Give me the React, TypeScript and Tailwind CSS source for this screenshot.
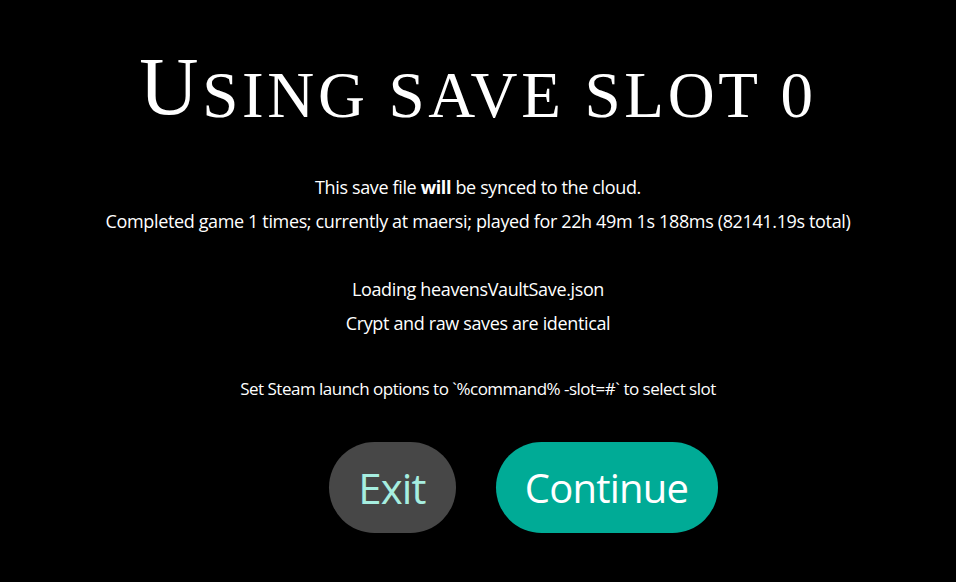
export default function App() {
  const body = { fontFamily: '"Open Sans", "Noto Sans", sans-serif' } as const;
  return (
    <div className="w-[956px] h-[582px] bg-black text-white flex flex-col items-center overflow-hidden">
      <h1
        className="mt-[52px] h-[76px] flex items-end text-white tracking-[0.23em] leading-none"
        style={{ fontFamily: '"Liberation Serif", serif' }}
      >
        <span className="text-[82px]">U</span>
        <span className="text-[65px]">SING SAVE SLOT 0</span>
      </h1>
      <div className="mt-[42px] flex flex-col items-center text-[18px] leading-[34px] tracking-[-0.02em]" style={body}>
        <p>
          This save file <b className="font-bold">will</b> be synced to the cloud.
        </p>
        <p>Completed game 1 times; currently at maersi; played for 22h 49m 1s 188ms (82141.19s total)</p>
        <p className="mt-[34px]">Loading heavensVaultSave.json</p>
        <p>Crypt and raw saves are identical</p>
        <p className="mt-[32px] text-[17px] tracking-[-0.03em]">Set Steam launch options to `%command% -slot=#` to select slot</p>
      </div>
      <div className="mt-[36px] ml-[90px] flex gap-10" style={body}>
        <button className="w-[127px] h-[91px] rounded-full bg-[#474747] text-[#a6eee0] text-[42px] tracking-[-0.02em]">Exit</button>
        <button className="w-[222px] h-[91px] rounded-full bg-[#00ab96] text-white text-[40px] tracking-[-0.02em]">Continue</button>
      </div>
    </div>
  );
}
